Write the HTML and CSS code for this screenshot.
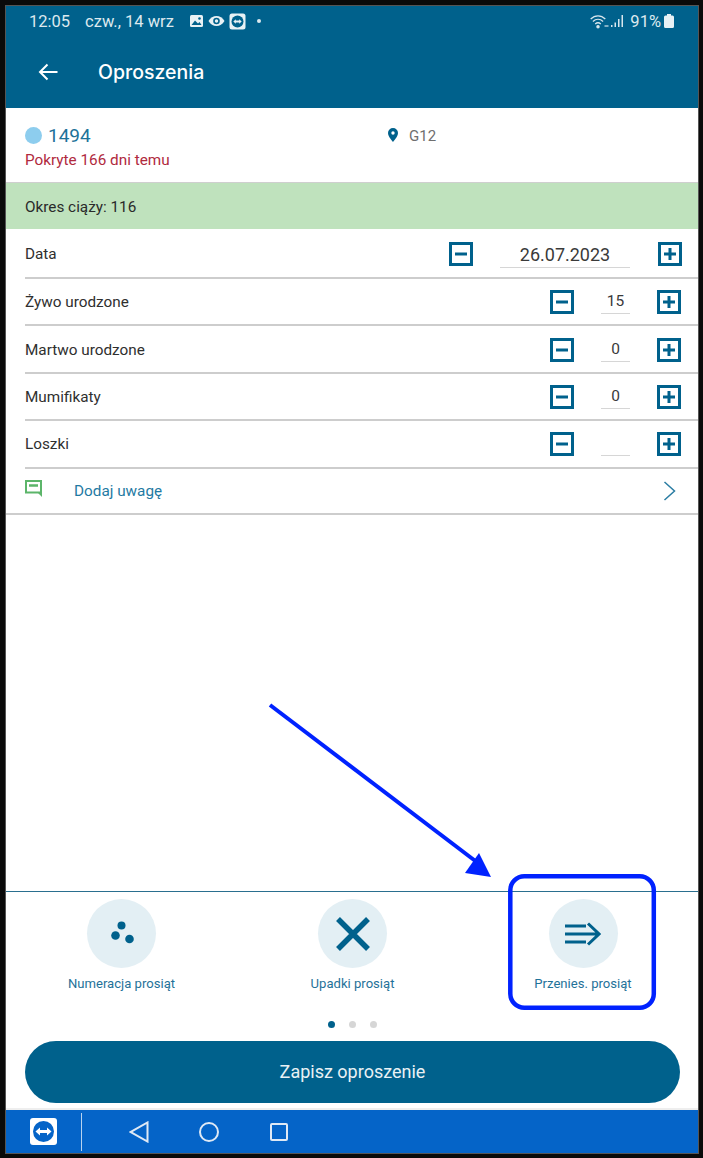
FILE: index.html
```html
<!DOCTYPE html>
<html lang="pl">
<head>
<meta charset="utf-8">
<title>Oproszenia</title>
<link rel="stylesheet" href="styles.css">
</head>
<body>
<div class="screen">
  <header class="appbar">
    <div class="status">
      <span class="time">12:05</span>
      <span class="date">czw., 14 wrz</span>
      <svg class="st-icon" width="15" height="14" viewBox="0 0 15 14"><rect x="1" y="1" width="13" height="12" rx="1.5" fill="#e8f1f5"/><circle cx="10.5" cy="4.5" r="1.3" fill="#00618c"/><path d="M2.500 11 6 6.500 9 9.500 10.500 8 12.500 11z" fill="#00618c"/></svg>
      <svg class="st-icon" width="17" height="12" viewBox="0 0 17 12"><path d="M.5 6C2.500 2.800 5.300 1 8.500 1s6 1.800 8 5c-2 3.200-4.800 5-8 5s-6-1.800-8-5z" fill="#e8f1f5"/><circle cx="8.500" cy="6" r="3.300" fill="#00618c"/><circle cx="8.500" cy="6" r="1.700" fill="#e8f1f5"/></svg>
      <svg class="st-icon" width="17" height="17" viewBox="0 0 17 17"><rect x=".5" y=".5" width="16" height="16" rx="2.500" fill="#e8f1f5"/><circle cx="8.500" cy="8.500" r="6" fill="#00618c"/><path d="M4.300 8.500 6.800 6.300v1.300h3.400V6.300l2.500 2.200-2.500 2.200V9.400H6.800v1.300z" fill="#e8f1f5"/></svg>
      <span class="st-dot"></span>
      <span class="st-right">
        <svg class="wifi" width="19" height="15" viewBox="0 0 19 15" fill="none" stroke="#d8e6ed" stroke-width="1.300"><path d="M.7 5C5 .7 11 .7 15.300 5"/><path d="M2.900 7.500c3-2.800 7.200-2.800 10.200 0"/><path d="M5.200 10c1.700-1.500 3.900-1.500 5.600 0"/><circle cx="8" cy="12.700" r="1.100" fill="#d8e6ed"/><path d="M14.500 12h4" stroke-width="1.200"/></svg>
        <svg class="signal" width="13" height="14" viewBox="0 0 13 14" fill="#d8e6ed"><rect x="0" y="11" width="1.500" height="2"/><rect x="3.500" y="8.500" width="1.500" height="4.500"/><rect x="7" y="5" width="1.500" height="8"/><rect x="10.500" y="1" width="1.500" height="12"/></svg>
        <span class="pct">91%</span>
        <svg class="batt" width="10" height="14" viewBox="0 0 10 14"><path d="M3 0h4v1.500h1.500A1.500 1.500 0 0 1 10 3v9.500A1.500 1.500 0 0 1 8.500 14h-7A1.500 1.500 0 0 1 0 12.500V3a1.500 1.500 0 0 1 1.500-1.500H3z" fill="#e8f1f5"/></svg>
      </span>
    </div>
    <div class="toolbar">
      <svg class="back" width="20" height="18" viewBox="0 0 20 18" fill="none" stroke="#fff" stroke-width="2"><path d="M19.500 9H2M9.500 1.500 2 9l7.500 7.500"/></svg>
      <h1 class="title">Oproszenia</h1>
    </div>
  </header>

  <section class="info">
    <div class="info-col">
      <div class="animal"><span class="animal-dot"></span><span class="animal-id">1494</span></div>
      <div class="covered">Pokryte 166 dni temu</div>
    </div>
    <div class="location">
      <svg width="10" height="14" viewBox="0 0 10 14"><path fill-rule="evenodd" d="M5 0a5 5 0 0 1 5 5c0 3.500-5 9-5 9S0 8.500 0 5a5 5 0 0 1 5-5zm0 3.300a1.700 1.700 0 1 0 0 3.400 1.700 1.700 0 0 0 0-3.400z" fill="#00618c"/></svg>
      <span class="loc-name">G12</span>
    </div>
  </section>

  <div class="pregnancy">Okres ciąży: 116</div>

  <div class="row row-date">
    <span class="row-label">Data</span>
    <span class="stepper stepper-date">
      <svg class="step" viewBox="0 0 24 24"><use href="#i-minus"/></svg>
      <span class="value value-date">26.07.2023</span>
      <svg class="step" viewBox="0 0 24 24"><use href="#i-plus"/></svg>
    </span>
  </div>
  <div class="row">
    <span class="row-label">Żywo urodzone</span>
    <span class="stepper">
      <svg class="step" viewBox="0 0 24 24"><use href="#i-minus"/></svg>
      <span class="value">15</span>
      <svg class="step" viewBox="0 0 24 24"><use href="#i-plus"/></svg>
    </span>
  </div>
  <div class="row">
    <span class="row-label">Martwo urodzone</span>
    <span class="stepper">
      <svg class="step" viewBox="0 0 24 24"><use href="#i-minus"/></svg>
      <span class="value">0</span>
      <svg class="step" viewBox="0 0 24 24"><use href="#i-plus"/></svg>
    </span>
  </div>
  <div class="row">
    <span class="row-label">Mumifikaty</span>
    <span class="stepper">
      <svg class="step" viewBox="0 0 24 24"><use href="#i-minus"/></svg>
      <span class="value">0</span>
      <svg class="step" viewBox="0 0 24 24"><use href="#i-plus"/></svg>
    </span>
  </div>
  <div class="row">
    <span class="row-label">Loszki</span>
    <span class="stepper">
      <svg class="step" viewBox="0 0 24 24"><use href="#i-minus"/></svg>
      <span class="value"></span>
      <svg class="step" viewBox="0 0 24 24"><use href="#i-plus"/></svg>
    </span>
  </div>
  <div class="note">
    <svg class="note-icon" width="18" height="17" viewBox="0 0 18 17" fill="none"><path d="M1 1h15v11.500H1z" stroke="#5cb56a" stroke-width="2"/><path d="M4 5.500h9" stroke="#5cb56a" stroke-width="2.500"/><path d="M13 13h4v4z" fill="#5cb56a"/></svg>
    <span class="note-text">Dodaj uwagę</span>
    <svg class="chev" width="13" height="20" viewBox="0 0 13 20" fill="none" stroke="#2a7da3" stroke-width="1.500"><path d="M1.500 1 11.500 10 1.500 19"/></svg>
  </div>

  <div class="spacer"></div>

  <nav class="actions">
    <div class="action">
      <span class="circle"><svg width="26" height="26" viewBox="0 0 26 26" fill="#00618c"><circle cx="12.500" cy="4.500" r="4"/><circle cx="6.500" cy="14.500" r="4.300"/><circle cx="20.500" cy="18" r="4.300"/></svg></span>
      <span class="action-label">Numeracja prosiąt</span>
    </div>
    <div class="action">
      <span class="circle"><svg width="36" height="36" viewBox="0 0 36 36" fill="none" stroke="#00618c" stroke-width="5.500"><path d="M3 3l30 30M33 3 3 33"/></svg></span>
      <span class="action-label">Upadki prosiąt</span>
    </div>
    <div class="action">
      <span class="circle"><svg width="36" height="24" viewBox="0 0 36 24" fill="none" stroke="#00618c" stroke-width="3"><path d="M0 4h21M0 12h33M0 20h21M23 1.500 34 12 23 22.500"/></svg></span>
      <span class="action-label">Przenies. prosiąt</span>
    </div>
  </nav>

  <div class="pager"><span class="pg pg-on"></span><span class="pg"></span><span class="pg"></span></div>

  <div class="save-wrap"><button class="save">Zapisz oproszenie</button></div>

  <footer class="navbar">
    <svg class="tv" width="27" height="27" viewBox="0 0 27 27"><rect width="27" height="27" rx="3" fill="#fff"/><circle cx="13.500" cy="13.500" r="10.500" fill="#0564c8"/><path d="M5.500 13.500 10 9.500v2.500h7V9.500l4.500 4-4.500 4V15h-7v2.500z" fill="#fff"/></svg>
    <span class="nav-sep"></span>
    <svg class="nav-b" width="20" height="22" viewBox="0 0 20 22" fill="none" stroke="#dfe9f5" stroke-width="2"><path d="M18.500 1.500v19L1.800 11z"/></svg>
    <svg class="nav-o" width="20" height="20" viewBox="0 0 20 20" fill="none" stroke="#dfe9f5" stroke-width="2"><circle cx="10" cy="10" r="9"/></svg>
    <svg class="nav-s" width="18" height="18" viewBox="0 0 18 18" fill="none" stroke="#dfe9f5" stroke-width="2"><rect x="1" y="1" width="16" height="16" rx="1"/></svg>
  </footer>
</div>

<svg class="overlay" width="703" height="1158" viewBox="0 0 703 1158" fill="none">
  <path d="M270 705 478 863" stroke="#0022ff" stroke-width="4"/>
  <path d="M491 877 465 873 479 853z" fill="#0022ff"/>
  <rect x="510.300" y="876.300" width="143.500" height="131.500" rx="14" stroke="#0022ff" stroke-width="4.500"/>
</svg>

<svg class="defs" width="0" height="0">
  <defs>
    <g id="i-minus" fill="none" stroke="#00618c"><rect x="1.500" y="1.500" width="21" height="21" stroke-width="3"/><path d="M6 12h12" stroke-width="3"/></g>
    <g id="i-plus" fill="none" stroke="#00618c"><rect x="1.500" y="1.500" width="21" height="21" stroke-width="3"/><path d="M6 12h12M12 6v12" stroke-width="3"/></g>
  </defs>
</svg>
</body>
</html>
```
FILE: styles.css
```css
* { box-sizing: border-box; }
html, body { margin: 0; height: 100%; }
body {
  background: #0a0a0a;
  font-family: Roboto, "Liberation Sans", sans-serif;
  position: relative;
  overflow: hidden;
  padding: 6px 5px 5px 6px;
}
.screen {
  height: 1147px;
  background: #fff;
  display: flex;
  flex-direction: column;
  outline: 1px solid #555;
}
.appbar { background: #00618c; height: 102px; color: #fff; flex: none; }
.status {
  height: 30px;
  display: flex;
  align-items: center;
  padding: 0 24px 0 23px;
  color: #dce9ef;
}
.time { font-size: 16.500px; margin-right: 15px; }
.date { font-size: 16.500px; margin-right: 15px; }
.st-icon { margin-right: 4px; flex: none; }
.st-dot { width: 4px; height: 4px; border-radius: 50%; background: #dce9ef; margin-left: 7px; }
.st-right { margin-left: auto; display: flex; align-items: center; gap: 2px; }
.pct { font-size: 16.500px; margin: 0 1px 0 4px; }
.toolbar { height: 72px; display: flex; align-items: center; padding: 0 0 0 32px; }
.back { flex: none; margin-right: 40px; }
.title { font: 500 19.500px Inter, "Open Sans", sans-serif; margin: 0; color: #fff; }

.info { height: 75px; flex: none; display: flex; padding: 17px 0 0 19px; border-bottom: 1px solid #cfcfcf; }
.info-col { width: 363px; }
.animal { display: flex; align-items: center; height: 20px; }
.animal-dot { width: 17px; height: 17px; border-radius: 50%; background: #8dcdee; margin-right: 6px; }
.animal-id { font-size: 19px; color: #1d7299; }
.covered { font-size: 15.300px; color: #b02a3e; margin-top: 6px; }
.location { display: flex; align-items: flex-start; height: 20px; gap: 11px; padding-top: 3px; }
.loc-name { font-size: 15px; color: #6f6f6f; margin-top: -1px; }

.pregnancy { height: 46px; flex: none; background: #bfe2bd; display: flex; align-items: center; padding: 1px 0 0 19px; font-size: 15.300px; color: #2a2a2a; }

.row {
  flex: none;
  height: 47.400px;
  margin-left: 19px;
  display: flex;
  align-items: center;
  justify-content: space-between;
  border-bottom: 2px solid #cdcdcd;
  padding-right: 17px;
  font-size: 15.300px;
  color: #2f2f2f;
}
.row-date { height: 50px; padding-right: 16px; }
.row-label { margin-top: 1px; }
.stepper { display: flex; align-items: center; margin-top: 1px; }
.step { width: 24px; height: 24px; flex: none; display: block; }
.value {
  width: 29px;
  height: 24px;
  margin: 0 27px;
  border-bottom: 1px solid #d6d6d6;
  text-align: center;
  font-size: 15.500px;
  line-height: 22px;
  color: #3a3a3a;
}
.value-date { width: 130px; height: 26px; margin: 2px 28px 0 27px; font-size: 18px; line-height: 25px; }
.note {
  flex: none;
  height: 46px;
  display: flex;
  align-items: center;
  padding: 0 22px 0 19px;
  border-bottom: 2px solid #cdcdcd;
}
.note-icon { flex: none; margin: -4px 31px 0 0; }
.note-text { font-size: 15.300px; color: #1f7aa3; }
.chev { margin-left: auto; }

.spacer { flex: 1; }

.actions {
  flex: none;
  height: 110px;
  border-top: 1px solid #2a6f8f;
  display: flex;
}
.action { flex: none; width: 231px; display: flex; flex-direction: column; align-items: center; padding-top: 7px; }
.action:last-child { width: 230px; }
.circle { width: 69px; height: 69px; border-radius: 50%; background: #e3eff4; display: flex; align-items: center; justify-content: center; }
.action-label { font-size: 13.100px; color: #1f7299; margin-top: 8px; }

.pager { flex: none; height: 38px; display: flex; justify-content: center; align-items: flex-start; gap: 14px; padding-top: 18px; margin-top: 2px; }
.pg { width: 7px; height: 7px; border-radius: 50%; background: #d6d6d6; }
.pg-on { background: #00618c; }

.save-wrap { flex: none; padding: 0 18px 5px 19px; border-bottom: 2px solid #eeeeee; }
.save {
  width: 100%;
  height: 62px;
  border: 0;
  border-radius: 31px;
  background: #00618c;
  color: #e9f1f5;
  font: 400 18px Roboto, sans-serif;
  display: block;
  padding: 0 0 2px;
}
.navbar {
  flex: none;
  height: 43px;
  background: #0564c8;
  display: flex;
  align-items: center;
  padding-left: 24px;
}
.tv { flex: none; }
.nav-sep { width: 1px; height: 38px; background: #b9d3ef; margin: 0 47px 0 24px; }
.nav-b { flex: none; margin-right: 50px; }
.nav-o { flex: none; margin-right: 51px; }
.nav-s { flex: none; }

.overlay { position: absolute; left: 0; top: 0; pointer-events: none; }
.defs { position: absolute; }
```
